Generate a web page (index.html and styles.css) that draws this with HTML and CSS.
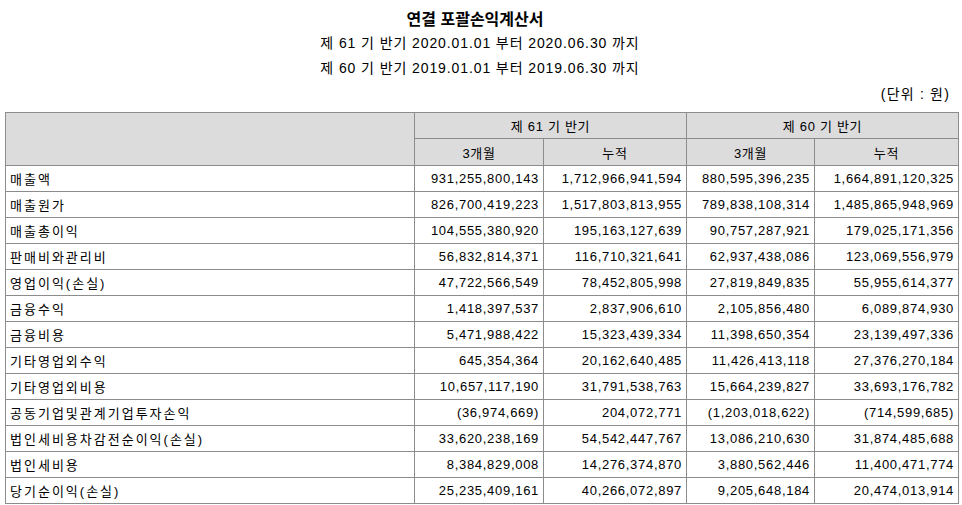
FILE: index.html
```html
<!DOCTYPE html>
<html lang="ko">
<head>
<meta charset="utf-8">
<link rel="stylesheet" href="styles.css">
</head>
<body>
<div class="head">
  <div class="title">연결 포괄손익계산서</div>
  <div class="sub">제 61 기 반기 2020.01.01 부터 2020.06.30 까지</div>
  <div class="sub">제 60 기 반기 2019.01.01 부터 2019.06.30 까지</div>
  <div class="unit">(단위 : 원)</div>
</div>
<table class="fs">
  <colgroup>
    <col class="c-label"><col class="c-a"><col class="c-b"><col class="c-a2"><col class="c-b2">
  </colgroup>
  <thead>
    <tr><th rowspan="2"></th><th colspan="2">제 61 기 반기</th><th colspan="2">제 60 기 반기</th></tr>
    <tr><th>3개월</th><th>누적</th><th>3개월</th><th>누적</th></tr>
  </thead>
  <tbody>
    <tr><td>매출액</td><td>931,255,800,143</td><td>1,712,966,941,594</td><td>880,595,396,235</td><td>1,664,891,120,325</td></tr>
    <tr><td>매출원가</td><td>826,700,419,223</td><td>1,517,803,813,955</td><td>789,838,108,314</td><td>1,485,865,948,969</td></tr>
    <tr><td>매출총이익</td><td>104,555,380,920</td><td>195,163,127,639</td><td>90,757,287,921</td><td>179,025,171,356</td></tr>
    <tr><td>판매비와관리비</td><td>56,832,814,371</td><td>116,710,321,641</td><td>62,937,438,086</td><td>123,069,556,979</td></tr>
    <tr><td>영업이익(손실)</td><td>47,722,566,549</td><td>78,452,805,998</td><td>27,819,849,835</td><td>55,955,614,377</td></tr>
    <tr><td>금융수익</td><td>1,418,397,537</td><td>2,837,906,610</td><td>2,105,856,480</td><td>6,089,874,930</td></tr>
    <tr><td>금융비용</td><td>5,471,988,422</td><td>15,323,439,334</td><td>11,398,650,354</td><td>23,139,497,336</td></tr>
    <tr><td>기타영업외수익</td><td>645,354,364</td><td>20,162,640,485</td><td>11,426,413,118</td><td>27,376,270,184</td></tr>
    <tr><td>기타영업외비용</td><td>10,657,117,190</td><td>31,791,538,763</td><td>15,664,239,827</td><td>33,693,176,782</td></tr>
    <tr><td>공동기업및관계기업투자손익</td><td>(36,974,669)</td><td>204,072,771</td><td>(1,203,018,622)</td><td>(714,599,685)</td></tr>
    <tr><td>법인세비용차감전순이익(손실)</td><td>33,620,238,169</td><td>54,542,447,767</td><td>13,086,210,630</td><td>31,874,485,688</td></tr>
    <tr><td>법인세비용</td><td>8,384,829,008</td><td>14,276,374,870</td><td>3,880,562,446</td><td>11,400,471,774</td></tr>
    <tr><td>당기순이익(손실)</td><td>25,235,409,161</td><td>40,266,072,897</td><td>9,205,648,184</td><td>20,474,013,914</td></tr>
  </tbody>
</table>
</body>
</html>
```

FILE: styles.css
```css
html, body {
  margin: 0;
  padding: 0;
  background: #fff;
  color: #000;
  font-family: "Liberation Sans", "Noto Sans CJK KR", sans-serif;
  font-size: 13px;
}
.head {
  padding-top: 6px;
  padding-right: 12px;
  text-align: center;
}
.title {
  font-family: "Noto Sans CJK KR", sans-serif;
  font-weight: bold;
  font-size: 16px;
  line-height: 25px;
}
.sub {
  font-size: 14px;
  line-height: 25px;
  letter-spacing: 0.9px;
  padding-left: 10px;
}
.sub + .sub { margin-top: 0; }
.head .sub:first-of-type { margin-top: 1px; }
.unit {
  text-align: right;
  font-size: 14px;
  line-height: 25px;
  letter-spacing: 1.2px;
  margin-top: 1px;
}
.fs {
  margin: 5px 0 0 5px;
  width: 953px;
  border-collapse: collapse;
  table-layout: fixed;
  border: 1px solid #000;
  letter-spacing: 0.7px;
}
.c-label { width: 409px; }
.c-a { width: 129px; }
.c-b { width: 143px; }
.c-a2 { width: 128px; }
.c-b2 { width: 144px; }
.fs tr { height: 26px; }
.fs thead tr:first-child { height: 26px; }
.fs thead tr:last-child { height: 27px; }
.fs th, .fs td {
  border: 1px solid #8c8c8c;
  padding: 0 4px;
  white-space: nowrap;
  vertical-align: middle;
}
.fs th {
  background: #dcdcdc;
  font-weight: normal;
  text-align: center;
}
.fs td { text-align: right; }
.fs td:first-child {
  text-align: left;
  letter-spacing: 2px;
}
```
